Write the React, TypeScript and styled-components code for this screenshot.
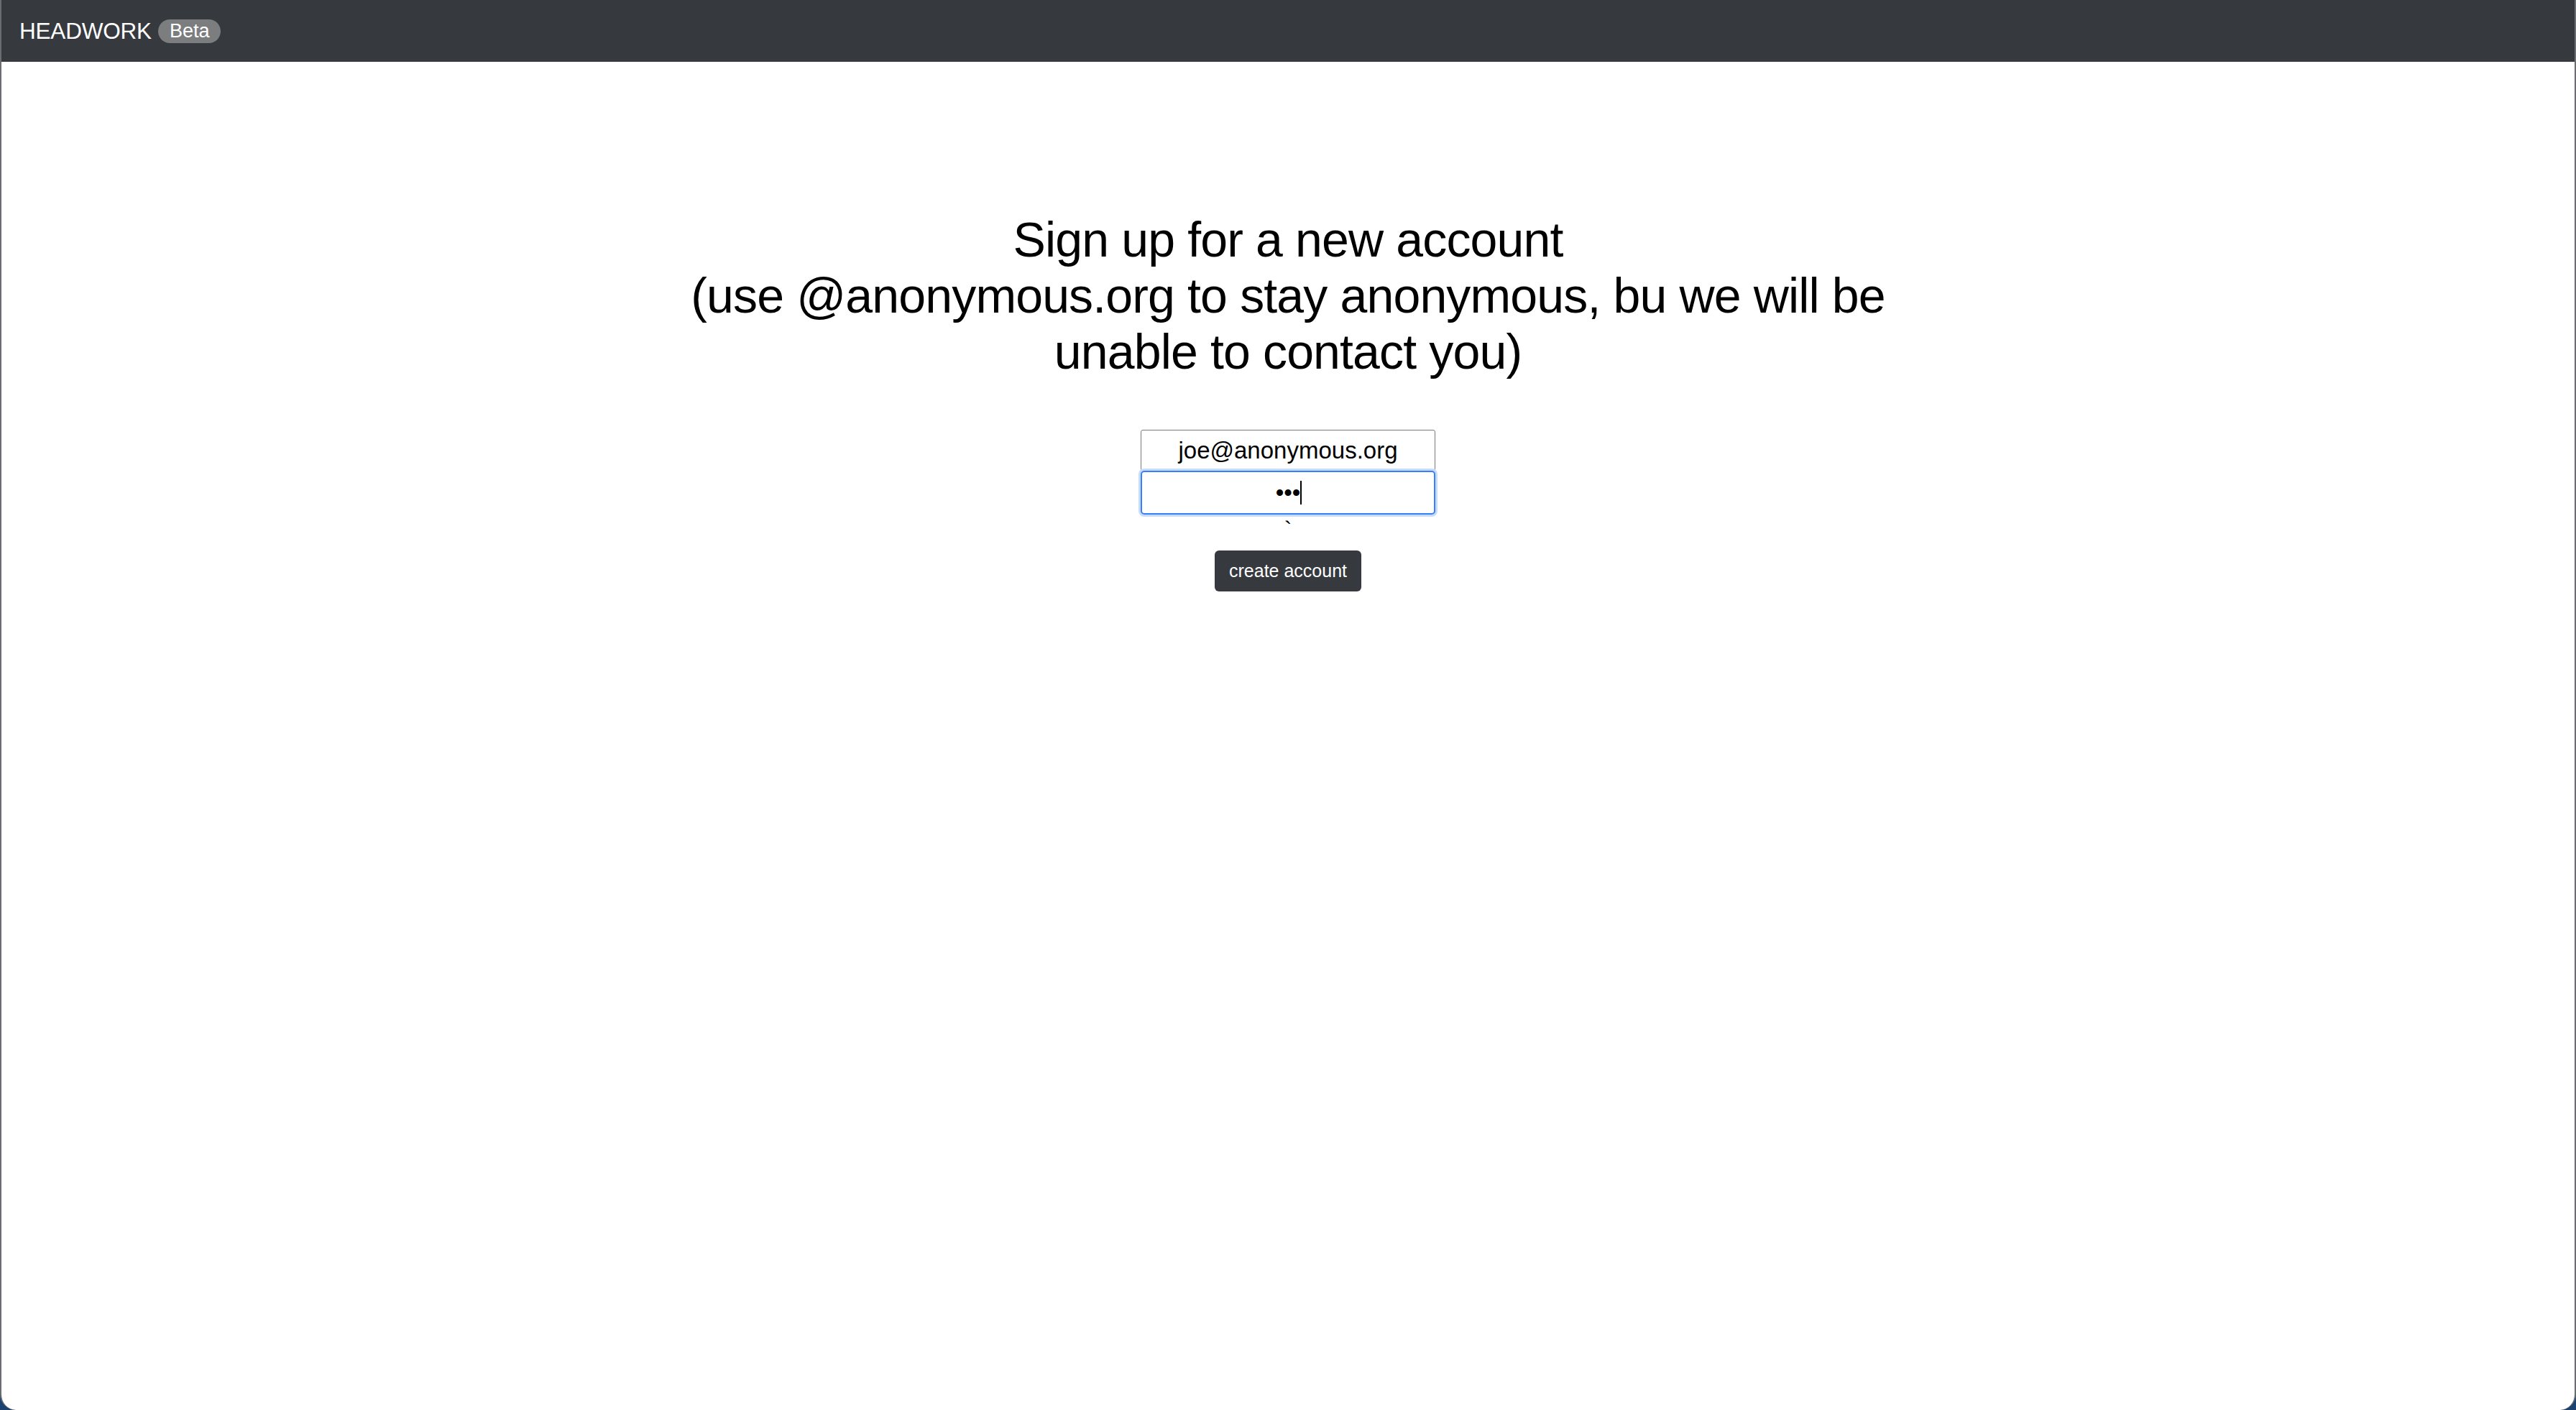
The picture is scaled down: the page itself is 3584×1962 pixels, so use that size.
import React from "react";
import styled, { createGlobalStyle } from "styled-components";

const GlobalStyle = createGlobalStyle`
  html {
    background: #1d4272;
  }
  body {
    margin: 0;
    font-family: "Liberation Sans", Arial, Helvetica, sans-serif;
    color: #000;
  }
`;

const Window = styled.div`
  min-height: 100vh;
  background: #fff;
  border-radius: 0 0 22px 22px;
  border-left: 2px solid #6a6d71;
  border-right: 2px solid #6a6d71;
  box-sizing: border-box;
  overflow: hidden;
`;

const Navbar = styled.header`
  height: 86px;
  display: flex;
  align-items: center;
  padding-left: 25px;
  background: #363a3f;
`;

const Brand = styled.span`
  font-size: 31.5px;
  color: #fff;
  letter-spacing: -0.2px;
`;

const Badge = styled.span`
  margin-left: 9px;
  height: 33px;
  padding: 0 16px;
  display: inline-flex;
  align-items: center;
  border-radius: 17px;
  background: #7c7d7f;
  color: #fff;
  font-size: 27px;
`;

const Main = styled.main`
  display: flex;
  flex-direction: column;
  align-items: center;
  padding-top: 208px;
`;

const Title = styled.h2`
  margin: 0;
  max-width: 1700px;
  font-size: 68px;
  line-height: 78px;
  letter-spacing: -0.85px;
  font-weight: normal;
  text-align: center;
`;

const Form = styled.form`
  display: flex;
  flex-direction: column;
  align-items: center;
  margin-top: 70px;
`;

const Field = styled.input<{ $focused?: boolean }>`
  box-sizing: border-box;
  width: 410px;
  height: ${(p) => (p.$focused ? "61px" : "57px")};
  margin: 0;
  padding: 0;
  font-family: "Liberation Sans", Arial, sans-serif;
  font-size: 33px;
  text-align: center;
  color: #000;
  caret-color: transparent;
  background: #fff;
  border: ${(p) => (p.$focused ? "2.5px solid #3a7ff6" : "1px solid #7a7a7a")};
  border-radius: ${(p) => (p.$focused ? "5px" : "3px")};
  box-shadow: ${(p) => (p.$focused ? "0 0 0 3px #c6dcfc" : "none")};
  outline: none;
`;

const FieldWrap = styled.div`
  position: relative;
`;

const Caret = styled.span`
  position: absolute;
  left: calc(50% + 17px);
  top: 14px;
  width: 2px;
  height: 33px;
  background: #000;
  pointer-events: none;
`;

const Stray = styled.span`
  font-size: 32px;
  line-height: 37px;
  height: 37px;
  margin-top: 3px;
`;

const SubmitButton = styled.button`
  margin-top: 10px;
  height: 57px;
  padding: 0 20px;
  border: none;
  border-radius: 6px;
  background: #363a3f;
  color: #fff;
  font-family: "Liberation Sans", Arial, sans-serif;
  font-size: 25px;
  cursor: pointer;
`;

const App = () => {
  return (
    <Window>
      <GlobalStyle />
      <Navbar>
        <Brand>HEADWORK</Brand>
        <Badge>Beta</Badge>
      </Navbar>
      <Main>
        <Title>
          Sign up for a new account
          <br />
          (use @anonymous.org to stay anonymous, bu we will be unable to contact you)
        </Title>
        <Form onSubmit={(e) => e.preventDefault()}>
          <Field type="email" defaultValue="joe@anonymous.org" />
          <FieldWrap>
            <Field type="password" defaultValue="abc" $focused />
            <Caret />
          </FieldWrap>
          <Stray>`</Stray>
          <SubmitButton type="submit">create account</SubmitButton>
        </Form>
      </Main>
    </Window>
  );
};

export default App;
